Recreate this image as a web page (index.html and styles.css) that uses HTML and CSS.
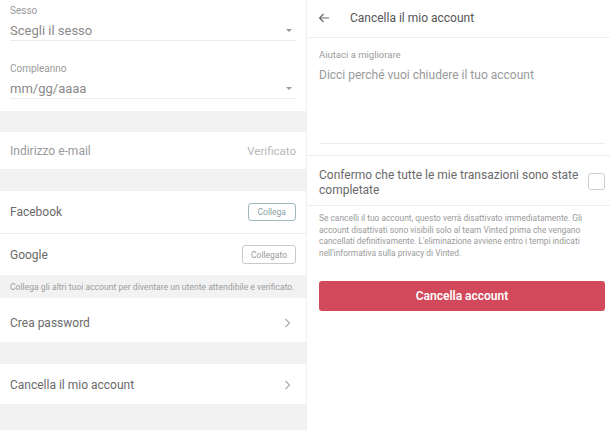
FILE: index.html
```html
<!DOCTYPE html>
<html lang="it">
<head>
<meta charset="utf-8">
<link rel="stylesheet" href="styles.css">
</head>
<body>
<div class="screens">
  <section class="panel left">
    <div class="field first">
      <div class="label">Sesso</div>
      <div class="select"><span>Scegli il sesso</span><span class="caret"></span></div>
    </div>
    <div class="field second">
      <div class="label">Compleanno</div>
      <div class="select"><span>mm/gg/aaaa</span><span class="caret"></span></div>
    </div>
    <div class="band b1"></div>
    <div class="row email"><span>Indirizzo e-mail</span><span class="muted">Verificato</span></div>
    <div class="band b2"></div>
    <div class="row social fb"><span>Facebook</span><span class="btn link">Collega</span></div>
    <div class="row social google"><span>Google</span><span class="btn">Collegato</span></div>
    <div class="band note">Collega gli altri tuoi account per diventare un utente attendibile e verificato.</div>
    <div class="row nav pw"><span>Crea password</span><svg class="chev" width="7" height="10" viewBox="0 0 7 10"><path d="M1.5 1 L5.5 5 L1.5 9" fill="none" stroke="#aaa" stroke-width="1.1"/></svg></div>
    <div class="band b3"></div>
    <div class="row nav del"><span>Cancella il mio account</span><svg class="chev" width="7" height="10" viewBox="0 0 7 10"><path d="M1.5 1 L5.5 5 L1.5 9" fill="none" stroke="#aaa" stroke-width="1.1"/></svg></div>
    <div class="band b4"></div>
  </section>
  <section class="panel right">
    <header class="topbar">
      <svg class="back" width="12" height="10" viewBox="0 0 12 10"><path d="M11 5 H1.5 M5.5 1 L1.5 5 L5.5 9" fill="none" stroke="#666" stroke-width="1.1"/></svg>
      <span class="title">Cancella il mio account</span>
    </header>
    <div class="reason">
      <div class="label">Aiutaci a migliorare</div>
      <div class="placeholder">Dicci perché vuoi chiudere il tuo account</div>
    </div>
    <div class="confirm">
      <span>Confermo che tutte le mie transazioni sono state completate</span>
      <span class="check"></span>
    </div>
    <p class="info">Se cancelli il tuo account, questo verrà disattivato immediatamente. Gli account disattivati sono visibili solo al team Vinted prima che vengano cancellati definitivamente. L'eliminazione avviene entro i tempi indicati nell'informativa sulla privacy di Vinted.</p>
    <div class="action"><button class="danger">Cancella account</button></div>
  </section>
</div>
</body>
</html>
```
FILE: styles.css
```css
* { box-sizing: border-box; margin: 0; padding: 0; }
html, body { background: #fff; }
body {
  font-family: Roboto, "Noto Sans", sans-serif;
  color: #6f6f6f;
  width: 610px;
  height: 430px;
  overflow: hidden;
}
.screens { display: flex; height: 430px; }
.panel { display: flex; flex-direction: column; }
.left { width: 307px; border-right: 1px solid #f0f0f0; }
.right { flex: 1; }

.field { padding: 0 10px; display: flex; flex-direction: column; }
.field.first { padding-top: 5px; height: 41px; }
.field.second { padding-top: 22px; height: 70px; }
.label { font-size: 10px; color: #9a9a9a; line-height: 12px; }
.select {
  display: flex; justify-content: space-between; align-items: center;
  margin-top: 3px; height: 21px;
  border-bottom: 1px solid #ececec;
  font-size: 13px; color: #8a8a8a;
}
.caret {
  width: 0; height: 0; margin-right: 4px;
  border-left: 3px solid transparent; border-right: 3px solid transparent;
  border-top: 3.5px solid #9a9a9a;
}

.band { background: #f2f2f2; }
.b1 { height: 21px; }
.b2 { height: 22px; }
.b3 { height: 22px; }
.b4 { flex: 1; }
.note { height: 23px; font-size: 8.6px; color: #9c9c9c; padding: 0 10px; display: flex; align-items: center; white-space: nowrap; }

.row { display: flex; justify-content: space-between; align-items: center; padding: 0 10px; font-size: 12px; color: #6a6a6a; }
.email { height: 37px; color: #9a9a9a; }
.muted { color: #b8b8b8; font-size: 11.5px; }
.fb { height: 43px; border-bottom: 1px solid #ededed; }
.google { height: 41px; }
.pw { height: 44px; padding-top: 5px; }
.del { height: 40px; padding-top: 1px; }
.chev { margin-right: 5px; }
.btn {
  font-size: 8.5px; color: #9a9a9a; border: 1px solid #c9c9c9; border-radius: 3px;
  height: 19px; padding: 0 8px; display: flex; align-items: center;
}
.btn.link { color: #8aa0a4; border-color: #9fb8bb; padding: 0 9px; height: 18px; }

.topbar { height: 38px; display: flex; align-items: center; border-bottom: 1px solid #efefef; padding-left: 11px; padding-bottom: 2px; }
.back { margin-right: 20px; }
.title { font-size: 12px; color: #555; }
.reason { height: 106px; margin: 0 5px 0 12px; padding-top: 11px; border-bottom: 1px solid #ededed; }
.reason .label { font-size: 9.5px; }
.placeholder { font-size: 12px; color: #9a9a9a; margin-top: 7px; }
.confirm {
  margin-top: 11px; height: 51px; border-top: 1px solid #ececec; border-bottom: 1px solid #ececec;
  display: flex; align-items: center; justify-content: space-between;
  padding: 4px 5px 0 12px; font-size: 12px; line-height: 15px; color: #6a6a6a;
}
.confirm span:first-child { width: 268px; }
.check { width: 17px; height: 17px; border: 1px solid #cfcfcf; border-radius: 3px; margin-top: -3px; }
.info { font-size: 8.4px; line-height: 11.7px; color: #9a9a9a; padding: 7px 4px 0 12px; }
.action { padding: 21px 5px 0 12px; }
.danger {
  width: 100%; height: 30px; border: none; border-radius: 3px;
  background: #d2495b; color: #fff; font-family: inherit; font-weight: 600; font-size: 12px;
}
```
